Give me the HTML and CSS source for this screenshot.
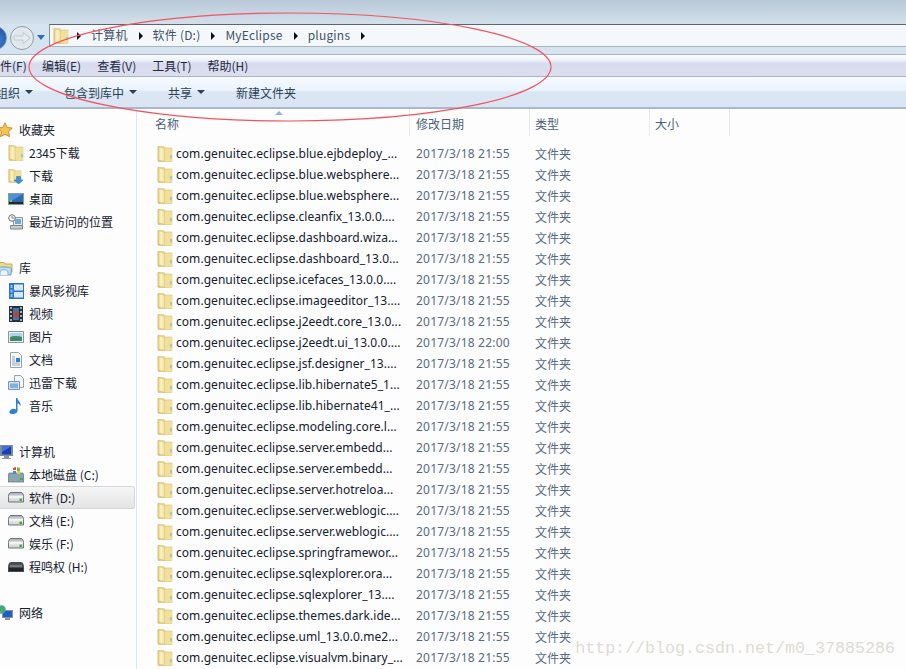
FILE: index.html
```html
<!DOCTYPE html>
<html lang="zh-CN">

<head>
    <meta charset="UTF-8">
    <title>plugins</title>
    <link rel="stylesheet" href="styles.css">
</head>

<body>
    <svg width="0" height="0" class="defs">
        <defs>
            <linearGradient id="fold" x1="0" x2="1" y1="0" y2="0">
                <stop offset="0" stop-color="#e3cc7c" />
                <stop offset="0.45" stop-color="#fbf4c8" />
                <stop offset="1" stop-color="#ecd98e" />
            </linearGradient>
            <linearGradient id="back" x1="0" x2="0" y1="0" y2="1">
                <stop offset="0" stop-color="#f0e3a8" />
                <stop offset="1" stop-color="#dcc476" />
            </linearGradient>
            <linearGradient id="diskbody" x1="0" x2="0" y1="0" y2="1">
                <stop offset="0" stop-color="#9aa0a3" />
                <stop offset="0.45" stop-color="#eef0f0" />
                <stop offset="1" stop-color="#c9cdcf" />
            </linearGradient>
            <symbol id="folder" viewBox="0 0 16 16">
                <path d="M1 0.500h6l1 1.500h7v13.500H1z" fill="url(#back)" stroke="#d8c27a" stroke-width="0.600" />
                <path d="M1 0.500l7 2v13l-7-1.500z" fill="url(#fold)" stroke="#cdb568" stroke-width="0.500" />
                <path d="M8 3h7v12.500H8z" fill="#f1e09a" />
                <path d="M13.500 9h1v3.500h-1z" fill="#62aee0" />
            </symbol>
            <symbol id="disk" viewBox="0 0 16 11">
                <path d="M3 0.500h10c1.500 0 2.500 2 2.500 4v5.500H0.500V4.500c0-2 1-4 2.500-4z" fill="url(#diskbody)" stroke="#70767a" />
                <path d="M1.500 5h13" stroke="#fafafa" />
                <path d="M11.500 6.500h2.500v2.500h-2.500z" fill="#46ac3e" />
            </symbol>
        </defs>
    </svg>

    <div class="titlebar"></div>

    <div class="nav">
        <div class="nav-buttons">
            <span class="back"></span>
            <span class="forward">
                <svg width="18" height="12" viewBox="0 0 18 12">
                    <path d="M1 4h9V0.500L17 6l-7 5.500V8H1z" fill="#e6ebf0" stroke="#c2cad2" />
                </svg>
            </span>
            <span class="drop"></span>
        </div>
        <div class="address">
            <svg class="addr-icon" width="16" height="16">
                <use href="#folder" />
            </svg>
            <span class="sep"></span><span class="crumb">计算机</span>
            <span class="sep"></span><span class="crumb">软件 (D:)</span>
            <span class="sep"></span><span class="crumb">MyEclipse</span>
            <span class="sep"></span><span class="crumb">plugins</span>
            <span class="sep"></span>
        </div>
    </div>

    <div class="menubar">
        <span class="menu-first">件(F)</span>
        <span>编辑(E)</span>
        <span>查看(V)</span>
        <span>工具(T)</span>
        <span>帮助(H)</span>
    </div>

    <div class="toolbar">
        <span class="tool-first">组织<i class="caret"></i></span>
        <span class="tool-lib">包含到库中<i class="caret"></i></span>
        <span class="tool-share">共享<i class="caret"></i></span>
        <span>新建文件夹</span>
    </div>

    <div class="main">
        <aside class="side">
            <div class="group">
                <div class="head">
                    <svg width="16" height="16" viewBox="0 0 16 16">
                        <path d="M8 0.800l2.200 4.700 5.100 0.600-3.800 3.500 1 5.100L8 12.200l-4.500 2.500 1-5.100L0.700 6.100l5.100-0.600z" fill="#f7c54e" stroke="#d08a2c" />
                    </svg>
                    收藏夹
                </div>
                <div class="item"><svg width="16" height="16"><use href="#folder" /></svg>2345下载</div>
                <div class="item">
                    <svg width="16" height="16" viewBox="0 0 16 16">
                        <use href="#folder" width="14" height="16" />
                        <path d="M8.500 8.500h4v3.500h2.500l-4.500 4-4.500-4h2.500z" fill="#3b8fdf" stroke="#2368b0" stroke-width="0.500" />
                    </svg>
                    下载
                </div>
                <div class="item">
                    <svg width="16" height="16" viewBox="0 0 16 16">
                        <path d="M0 2h16v12H0z" fill="#8a97a4" />
                        <path d="M1 3h14v8H1z" fill="#2b6cb4" />
                        <path d="M1 3h14L3 10H1z" fill="#4e93d6" />
                        <path d="M1 11h14v2H1z" fill="#23272b" />
                        <path d="M2 9h2v2H2z" fill="#8fc24a" />
                    </svg>
                    桌面
                </div>
                <div class="item">
                    <svg width="16" height="16" viewBox="0 0 16 16">
                        <path d="M5.500 3.500h9v8h-9z" fill="#e8ecee" stroke="#8d9499" />
                        <path d="M7 5h6v5H7z" fill="#72aad6" />
                        <path d="M2.500 11.500h12v3.500h-12z" fill="#c8cdd0" stroke="#7d8388" />
                        <circle cx="4" cy="4" r="3.300" fill="#f6f6f6" stroke="#6f7478" />
                        <path d="M4 2v2h2" fill="none" stroke="#555" stroke-width="0.700" />
                    </svg>
                    最近访问的位置
                </div>
            </div>

            <div class="group">
                <div class="head">
                    <svg width="16" height="16" viewBox="0 0 16 16">
                        <path d="M2 2.500h5l1 1.500h7v8H2z" fill="#ecd98c" stroke="#c4aa5c" />
                        <path d="M0.500 8.500c1-1 2-1.500 7-1.500s6 0.500 7 1.500l-0.500 6.500H1z" fill="#bcdcf2" stroke="#6fa0c6" />
                        <path d="M3 15v-3c0-3 8-3 8 0v3" fill="#e9f4fb" stroke="#7fb0d4" />
                    </svg>
                    库
                </div>
                <div class="item">
                    <svg width="16" height="16" viewBox="0 0 16 16">
                        <path d="M1 0h15v16H1z" fill="#2a74d4" />
                        <path d="M6 1.500h9v6H6zM6 9h9v5.500H6z" fill="#d8e8f8" />
                        <path d="M2.500 2h2v3h-2zM2.500 6.500h2v3h-2zM2.500 11h2v3h-2z" fill="#8fc0f0" />
                    </svg>
                    暴风影视库
                </div>
                <div class="item">
                    <svg width="16" height="16" viewBox="0 0 16 16">
                        <path d="M1 0h14v16H1z" fill="#26303a" />
                        <path d="M2 1h2v2H2zM2 5h2v2H2zM2 9h2v2H2zM2 13h2v2H2zM12 1h2v2h-2zM12 5h2v2h-2zM12 9h2v2h-2zM12 13h2v2h-2z" fill="#a8b0b8" />
                        <path d="M5 2h6v12H5z" fill="#3f78a8" />
                        <path d="M5 8l3-3 3 2v3l-3 2-3-2z" fill="#b5473f" />
                    </svg>
                    视频
                </div>
                <div class="item">
                    <svg width="16" height="16" viewBox="0 0 16 16">
                        <path d="M0.500 2.500h15v11h-15z" fill="#eef1f2" stroke="#8d9499" />
                        <path d="M2 4h12v4H2z" fill="#a9d3ea" />
                        <path d="M2 8c3-1.500 8-1.500 12 0v4H2z" fill="#3f8a6a" />
                    </svg>
                    图片
                </div>
                <div class="item">
                    <svg width="16" height="16" viewBox="0 0 16 16">
                        <path d="M2.500 0.500h8l3 3v12h-11z" fill="#f6f8fa" stroke="#9aa2a8" />
                        <path d="M4 5h3M4 7h3M4 9h3M4 11h8M4 13h8" stroke="#8fa8c4" />
                        <path d="M8 6h4v4H8z" fill="#2f7fc8" />
                    </svg>
                    文档
                </div>
                <div class="item">
                    <svg width="16" height="16" viewBox="0 0 16 16">
                        <path d="M6.500 0.500h6l3 3v9h-9z" fill="#f2f5f7" stroke="#9aa2a8" />
                        <path d="M0.500 6.500h11v8h-11z" fill="#cfe2f2" stroke="#7f97ad" />
                        <path d="M2 8.500h8v4.500H2z" fill="#7fb2dc" />
                    </svg>
                    迅雷下载
                </div>
                <div class="item">
                    <svg width="16" height="16" viewBox="0 0 16 16">
                        <path d="M8 0h1.300c0.200 3 4.200 3.800 3.200 8.500C12 6 10.300 5.500 9.500 5.500V13c0 2-2.500 3-5 3S0.500 14.500 2 12.500 6 10.500 8 11.500z" fill="#2f7fd0" />
                    </svg>
                    音乐
                </div>
            </div>

            <div class="group">
                <div class="head">
                    <svg width="16" height="16" viewBox="0 0 16 16">
                        <path d="M3 1h13v11H3z" fill="#7b8b9a" />
                        <path d="M5 2.500h9v8H5z" fill="#1640b8" />
                        <path d="M5 2.500h9L5 8z" fill="#3f74dc" />
                        <path d="M7 12h5v2h2v1H5v-1h2z" fill="#8d9499" />
                    </svg>
                    计算机
                </div>
                <div class="item">
                    <svg width="16" height="16" viewBox="0 0 16 16">
                        <path d="M1 6h14l1 3v6H0V9z" fill="#8aa4b0" stroke="#55676f" stroke-width="0.600" />
                        <path d="M12 11h3v2h-3z" fill="#46ac3e" />
                        <path d="M5 1l3-1v3H5z" fill="#e0492f" />
                        <path d="M9 0l3 1v3H9z" fill="#7ab648" />
                        <path d="M5 4h3v3H5z" fill="#3f8fdc" />
                        <path d="M9 4h3v3H9z" fill="#f2c230" />
                    </svg>
                    本地磁盘 (C:)
                </div>
                <div class="item current"><svg width="16" height="11"><use href="#disk" /></svg>软件 (D:)</div>
                <div class="item"><svg width="16" height="11"><use href="#disk" /></svg>文档 (E:)</div>
                <div class="item"><svg width="16" height="11"><use href="#disk" /></svg>娱乐 (F:)</div>
                <div class="item">
                    <svg width="16" height="10" viewBox="0 0 16 10">
                        <path d="M3 0h10c2 0 3 3 3 5v5H0V5c0-2 1-5 3-5z" fill="#4a4d50" />
                        <path d="M2 4h12" stroke="#a2a6a9" />
                        <path d="M1 6h14v3H1z" fill="#232427" />
                    </svg>
                    程鸣权 (H:)
                </div>
            </div>

            <div class="group">
                <div class="head">
                    <svg width="16" height="16" viewBox="0 0 16 16">
                        <path d="M5 5h11v8H5z" fill="#8d9499" />
                        <path d="M6 6h9v6H6z" fill="#1a5fc8" />
                        <path d="M8 13h5v2H8z" fill="#8d9499" />
                        <circle cx="4.500" cy="4.500" r="4.200" fill="#3f9fd8" />
                        <path d="M2 2l4-1 2 3-3 4-2-3z" fill="#52ae4c" />
                    </svg>
                    网络
                </div>
            </div>
        </aside>

        <section class="files">
            <div class="columns">
                <span class="sort"></span>
                <div class="col col-name">名称</div>
                <div class="col col-date">修改日期</div>
                <div class="col col-type">类型</div>
                <div class="col col-size">大小</div>
            </div>
            <div id="rows"></div>
        </section>
    </div>

    <div class="watermark">http://blog.csdn.net/m0_37885286</div>

    <svg class="annotation" width="906" height="130" viewBox="0 0 906 130">
        <ellipse cx="290" cy="67" rx="261" ry="54" fill="none" stroke="#f0555f" stroke-width="1.200" />
    </svg>

    <script>
        const files = [
            ["com.genuitec.eclipse.blue.ejbdeploy_...", "21:55"],
            ["com.genuitec.eclipse.blue.websphere...", "21:55"],
            ["com.genuitec.eclipse.blue.websphere...", "21:55"],
            ["com.genuitec.eclipse.cleanfix_13.0.0....", "21:55"],
            ["com.genuitec.eclipse.dashboard.wiza...", "21:55"],
            ["com.genuitec.eclipse.dashboard_13.0...", "21:55"],
            ["com.genuitec.eclipse.icefaces_13.0.0....", "21:55"],
            ["com.genuitec.eclipse.imageeditor_13....", "21:55"],
            ["com.genuitec.eclipse.j2eedt.core_13.0...", "21:55"],
            ["com.genuitec.eclipse.j2eedt.ui_13.0.0....", "22:00"],
            ["com.genuitec.eclipse.jsf.designer_13....", "21:55"],
            ["com.genuitec.eclipse.lib.hibernate5_1...", "21:55"],
            ["com.genuitec.eclipse.lib.hibernate41_...", "21:55"],
            ["com.genuitec.eclipse.modeling.core.l...", "21:55"],
            ["com.genuitec.eclipse.server.embedd...", "21:55"],
            ["com.genuitec.eclipse.server.embedd...", "21:55"],
            ["com.genuitec.eclipse.server.hotreloa...", "21:55"],
            ["com.genuitec.eclipse.server.weblogic....", "21:55"],
            ["com.genuitec.eclipse.server.weblogic....", "21:55"],
            ["com.genuitec.eclipse.springframewor...", "21:55"],
            ["com.genuitec.eclipse.sqlexplorer.ora...", "21:55"],
            ["com.genuitec.eclipse.sqlexplorer_13....", "21:55"],
            ["com.genuitec.eclipse.themes.dark.ide...", "21:55"],
            ["com.genuitec.eclipse.uml_13.0.0.me2...", "21:55"],
            ["com.genuitec.eclipse.visualvm.binary_...", "21:55"]
        ];

        // one row per folder
        const rows = document.getElementById("rows");
        files.forEach(function (f) {
            const row = document.createElement("div");
            row.className = "row";
            row.innerHTML = `
                <svg width="16" height="16"><use href="#folder" /></svg>
                <span class="name">${f[0]}</span>
                <span class="date">2017/3/18 ${f[1]}</span>
                <span class="type">文件夹</span>
            `;
            rows.appendChild(row);
        });
    </script>
</body>

</html>
```

FILE: styles.css
```css
body {
    margin: 0;
    width: 906px;
    height: 669px;
    overflow: hidden;
    position: relative;
    background: #fdfdfd;
    font-family: "Noto Sans CJK SC", "Noto Sans", sans-serif;
    font-size: 12px;
    color: #1e2a38;
}

.defs {
    display: block;
    height: 0;
}

.titlebar {
    height: 24px;
    background: linear-gradient(#b9c9d8, #d3e0ec);
}

.nav {
    height: 30px;
    display: flex;
    background: #d6e3f0;
}

.nav-buttons {
    width: 49px;
    display: flex;
    align-items: flex-start;
    flex-shrink: 0;
}

.back {
    width: 24px;
    height: 24px;
    margin: 2px 0 0 -17px;
    box-sizing: border-box;
    flex-shrink: 0;
    border-radius: 50%;
    background: radial-gradient(circle at 60% 60%, #3f83d8, #123f8c);
    border: 1px solid #7d94ae;
}

.forward {
    width: 24px;
    height: 24px;
    margin: 2px 0 0 3px;
    box-sizing: border-box;
    flex-shrink: 0;
    border-radius: 50%;
    background: radial-gradient(circle, #dfe6ed 50%, #f2f5f8 100%);
    border: 1px solid #8f9aa6;
    display: flex;
    align-items: center;
    justify-content: center;
}

.drop {
    width: 0;
    height: 0;
    margin: 11px 0 0 3px;
    border-left: 4px solid transparent;
    border-right: 4px solid transparent;
    border-top: 5px solid #2a6fb0;
}

.address {
    flex: 1;
    height: 21px;
    display: flex;
    align-items: center;
    background: #f5f8fb;
    border-top: 1px solid #5d666e;
    border-bottom: 1px solid #aab4bb;
    border-left: 1px solid #8a949c;
    font-size: 12px;
    color: #3f5266;
}

.addr-icon {
    margin-left: 3px;
}

.sep {
    width: 0;
    height: 0;
    margin: 0 10px 0 11px;
    border-top: 4px solid transparent;
    border-bottom: 4px solid transparent;
    border-left: 4px solid #111;
}

.address .addr-icon + .sep {
    margin-left: 8px;
}

.crumb {
    white-space: nowrap;
    padding-bottom: 2px;
    letter-spacing: 0.2px;
}

.menubar {
    height: 23px;
    box-sizing: border-box;
    display: flex;
    align-items: center;
    gap: 16px;
    border-top: 1px solid #a9b6c2;
    border-bottom: 1px solid #aab2c4;
    background: linear-gradient(#fbfdff 0, #eef2fa 25%, #d8dcee 40%, #dadeee 100%);
    font-size: 12px;
    color: #1e2a40;
}

.menu-first {
    width: 26px;
    flex-shrink: 0;
    white-space: nowrap;
}

.toolbar {
    height: 32px;
    box-sizing: border-box;
    display: flex;
    align-items: center;
    background: linear-gradient(#f6fafe 0, #eaf3fc 45%, #dbe6f4 50%, #dbe5f3 100%);
    border-bottom: 2px solid #a9b8cc;
    color: #2c3f57;
}

.toolbar span {
    display: flex;
    align-items: center;
    white-space: nowrap;
}

.tool-first {
    margin-left: -4px;
    width: 68px;
}

.tool-lib {
    width: 104px;
}

.tool-share {
    width: 68px;
}

.caret {
    width: 0;
    height: 0;
    margin-left: 5px;
    border-left: 4px solid transparent;
    border-right: 4px solid transparent;
    border-top: 4px solid #2c3f57;
}

.main {
    display: flex;
    height: 560px;
}

.side {
    width: 137px;
    flex-shrink: 0;
    box-sizing: border-box;
    border-right: 1px solid #dfe8f2;
    padding-top: 9px;
    color: #14202e;
}

.group {
    margin-bottom: 23px;
}

.head {
    height: 23px;
    display: flex;
    align-items: center;
    gap: 6px;
    margin-left: -3px;
}

.item {
    height: 23px;
    display: flex;
    align-items: center;
    gap: 5px;
    padding-left: 8px;
    white-space: nowrap;
}

.item svg {
    width: 16px;
    flex-shrink: 0;
}

.current {
    box-sizing: border-box;
    margin-right: 1px;
    background: linear-gradient(#f6f6f6, #e4e4e4);
    border: 1px solid #d4d6d8;
    border-left: none;
    border-radius: 0 3px 3px 0;
}

.files {
    flex: 1;
    position: relative;
    min-width: 0;
}

.columns {
    height: 27px;
    display: flex;
    padding-left: 9px;
    margin-bottom: 7px;
    color: #4c6078;
}

.col {
    box-sizing: border-box;
    padding: 6px 0 0 9px;
    border-right: 1px solid #e4ebf2;
}

.col-name {
    width: 264px;
}

.col-date {
    width: 120px;
    padding-left: 6px;
}

.col-type {
    width: 120px;
    padding-left: 5px;
}

.col-size {
    width: 80px;
    padding-left: 5px;
}

.sort {
    position: absolute;
    left: 138px;
    top: 2px;
    width: 0;
    height: 0;
    border-left: 4px solid transparent;
    border-right: 4px solid transparent;
    border-bottom: 4px solid #8db4d2;
}

.row {
    height: 21px;
    display: flex;
    align-items: center;
    padding-left: 20px;
}

.row .name {
    margin-left: 3px;
    width: 240px;
    white-space: nowrap;
    color: #14202e;
    font-family: "Noto Sans", sans-serif;
    letter-spacing: 0.05px;
}

.row .date {
    width: 119px;
    color: #566a80;
    font-family: "Noto Sans", sans-serif;
    letter-spacing: 0.2px;
}

.row .type {
    color: #566a80;
}

.watermark {
    position: absolute;
    right: 11px;
    bottom: 11px;
    font-family: "Liberation Mono", monospace;
    font-size: 16.67px;
    color: #dddcd6;
    white-space: nowrap;
}

.annotation {
    position: absolute;
    left: 0;
    top: 0;
    pointer-events: none;
}
```
